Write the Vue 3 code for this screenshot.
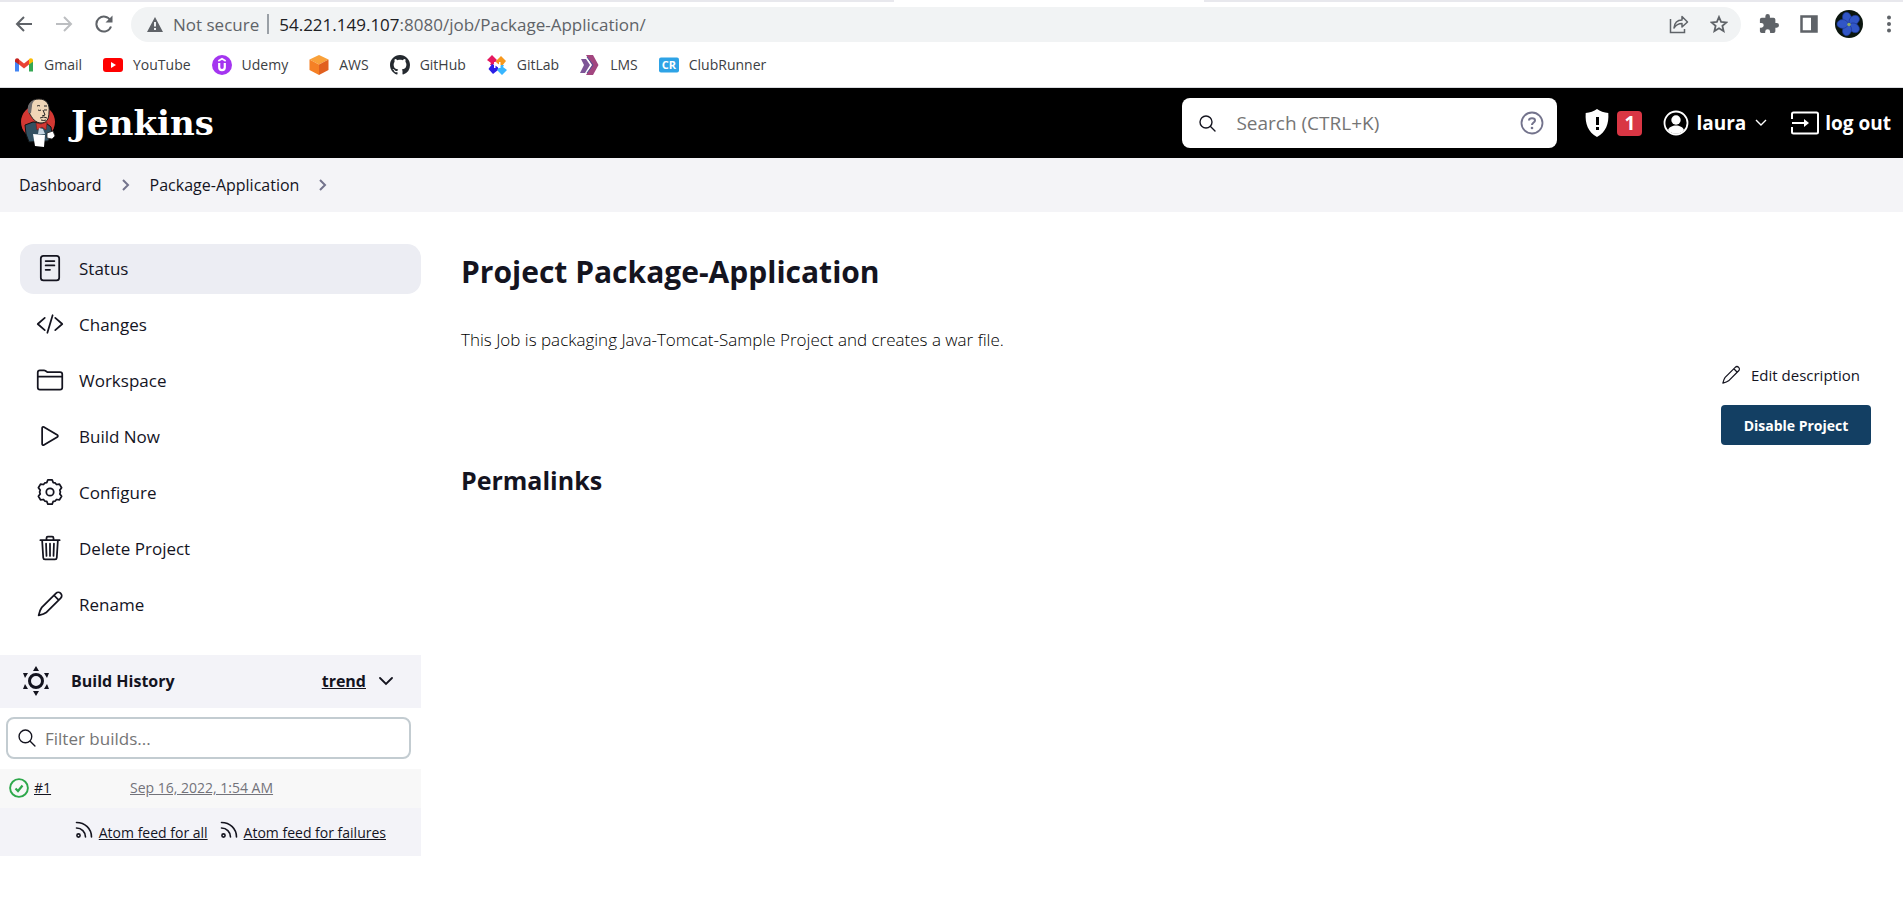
<script setup>
const bookmarks = [
  { id: 'gmail', label: 'Gmail' },
  { id: 'youtube', label: 'YouTube' },
  { id: 'udemy', label: 'Udemy' },
  { id: 'aws', label: 'AWS' },
  { id: 'github', label: 'GitHub' },
  { id: 'gitlab', label: 'GitLab' },
  { id: 'lms', label: 'LMS' },
  { id: 'club', label: 'ClubRunner' },
]
const tasks = [
  { id: 'status', label: 'Status', active: true },
  { id: 'changes', label: 'Changes' },
  { id: 'workspace', label: 'Workspace' },
  { id: 'build', label: 'Build Now' },
  { id: 'configure', label: 'Configure' },
  { id: 'delete', label: 'Delete Project' },
  { id: 'rename', label: 'Rename' },
]
const feeds = ['Atom feed for all', 'Atom feed for failures']

// Six-lobed cog outline on a 512 grid
const cogProfile = [[-19, 182], [-10, 226], [10, 226], [19, 182], [30, 190]]
const cogPoints = Array.from({ length: 6 }, (_, k) =>
  cogProfile.map(([deg, r]) => {
    const a = ((k * 60 - 90 + deg) * Math.PI) / 180
    return `${Math.round(256 + r * Math.cos(a))},${Math.round(256 + r * Math.sin(a))}`
  }).join(' ')
).join(' ')
const pencil = 'M364 60A62 62 0 01452 148L194 406Q150 440 48 464Q72 362 106 318ZM328 96l88 88'
</script>

<template>
  <div class="page">
    <div class="tabs"><span class="tab"></span></div>
    <div class="toolbar">
      <button class="tool" aria-label="Back">
        <svg width="18" height="18" viewBox="0 0 18 18" fill="none" stroke="#5f6368" stroke-width="2"><path d="M17 9H2M9 2L2 9l7 7" /></svg>
      </button>
      <button class="tool" aria-label="Forward">
        <svg width="18" height="18" viewBox="0 0 18 18" fill="none" stroke="#bcbec1" stroke-width="2"><path d="M1 9h15M9 2l7 7-7 7" /></svg>
      </button>
      <button class="tool" aria-label="Reload">
        <svg width="18" height="18" viewBox="0 0 18 18" fill="none" stroke="#5f6368" stroke-width="2"><path d="M15.500 5.500A7.500 7.500 0 1 0 16 11.500" /><path d="M17.500.5v7h-7z" fill="#5f6368" stroke="none" /></svg>
      </button>
      <div class="omnibox">
        <svg width="16" height="15" viewBox="0 0 16 15"><path d="M8 0l8 15H0z" fill="#5f6368" /><path d="M7 5h2v4.500H7zM7 11h2v2H7z" fill="#f1f3f4" /></svg>
        <span class="insecure">Not secure</span>
        <span class="sep"></span>
        <span class="url"><b>54.221.149.107</b>:8080/job/Package-Application/</span>
        <button class="in-pill" aria-label="Share">
          <svg width="20" height="20" viewBox="0 0 20 20" fill="none" stroke="#5f6368" stroke-width="1.500"><path d="M1.500 5v13.500h14V15" /><path d="M5 14C5.500 9 8.500 6 13 6V2.500L18.500 8 13 13V9.500C9.500 9.500 7 11 5 14z" stroke-linejoin="round" /></svg>
        </button>
        <button class="in-pill" aria-label="Bookmark">
          <svg width="18" height="18" viewBox="0 0 18 18" fill="none" stroke="#5f6368" stroke-width="1.800"><path d="M9 2l2.100 4.900 5.300.5-4 3.500 1.200 5.200L9 13.300l-4.600 2.800 1.200-5.200-4-3.500 5.300-.5z" /></svg>
        </button>
      </div>
      <button class="ext" aria-label="Extensions">
        <svg width="20" height="20" viewBox="1 1 22 22" fill="#5f6368"><path d="M20.500 11H19V7a2 2 0 0 0-2-2h-4V3.500a2.500 2.500 0 0 0-5 0V5H4a2 2 0 0 0-2 2v3.800h1.500a2.700 2.700 0 0 1 0 5.400H2V20a2 2 0 0 0 2 2h3.800v-1.500a2.700 2.700 0 0 1 5.400 0V22H17a2 2 0 0 0 2-2v-4h1.500a2.500 2.500 0 0 0 0-5z" /></svg>
      </button>
      <button class="ext" aria-label="Side panel">
        <svg width="18" height="18" viewBox="0 0 18 18"><path d="M1.500 1.500h15v15h-15z" fill="#fff" stroke="#5f6368" stroke-width="2.500" /><path d="M11 1h6v16h-6z" fill="#5f6368" /></svg>
      </button>
      <button class="ext" aria-label="Profile">
        <svg width="28" height="28" viewBox="0 0 28 28">
          <circle cx="14" cy="14" r="14" fill="#0b160f" />
          <g fill="#3156c6" stroke="#1c3590" stroke-width=".6">
            <ellipse v-for="a in [-18, 54, 126, 198, 270]" :key="a" cx="14" cy="7.500" rx="4.400" ry="5.600" :transform="`rotate(${a} 14 14)`" />
          </g>
          <circle cx="14" cy="14.500" r="1.800" fill="#8fae6a" />
        </svg>
      </button>
      <button class="menu" aria-label="Menu">
        <svg width="6" height="18" viewBox="0 0 6 18" fill="#5f6368"><circle cx="3" cy="2.500" r="2" /><circle cx="3" cy="9" r="2" /><circle cx="3" cy="15.500" r="2" /></svg>
      </button>
    </div>

    <nav class="bookmarks" aria-label="Bookmarks">
      <a v-for="b in bookmarks" :key="b.id" href="#">
        <svg width="20" height="20" viewBox="0 0 20 20">
          <template v-if="b.id === 'gmail'">
            <path d="M1 5v11.500h4V9z" fill="#4285f4" /><path d="M15 9v7.500h4V5z" fill="#34a853" />
            <path d="M5 4.500v5l5 4 5-4v-5l-5 4z" fill="#ea4335" /><path d="M1 5.500C1 3 3.500 2.600 5 4v5.500L1 6.800z" fill="#c5221f" /><path d="M19 5.500C19 3 16.500 2.600 15 4v5.500l4-2.700z" fill="#fbbc04" />
          </template>
          <template v-else-if="b.id === 'youtube'">
            <rect y="3" width="20" height="14" rx="3" fill="#f00" /><path d="M8 7l5 3-5 3z" fill="#fff" />
          </template>
          <template v-else-if="b.id === 'udemy'">
            <circle cx="10" cy="10" r="10" fill="#a435f0" /><path d="M6.300 6L10 3.800 13.700 6" fill="none" stroke="#fff" stroke-width="1.700" /><path d="M7.200 8v4.300a2.800 2.800 0 0 0 5.600 0V8" fill="none" stroke="#fff" stroke-width="2.200" />
          </template>
          <template v-else-if="b.id === 'aws'">
            <path d="M10 0l9.500 4.500L10 9.500.5 4.500z" fill="#f9a13a" /><path d="M.5 4.500l9.500 5V20l-9.500-5z" fill="#f58025" /><path d="M19.500 4.500l-9.500 5V20l9.500-5z" fill="#e1601f" />
          </template>
          <path v-else-if="b.id === 'github'" transform="scale(1.250)" fill="#24292f" d="M8 0C3.580 0 0 3.580 0 8c0 3.540 2.290 6.530 5.470 7.590.4.070.55-.17.55-.38 0-.19-.01-.82-.01-1.490-2.010.37-2.530-.49-2.690-.94-.09-.23-.48-.94-.82-1.130-.28-.15-.68-.52-.01-.53.63-.01 1.080.58 1.230.82.72 1.210 1.870.87 2.330.66.070-.52.280-.87.510-1.070-1.780-.2-3.640-.89-3.640-3.950 0-.87.310-1.590.82-2.150-.08-.2-.36-1.020.08-2.120 0 0 .67-.21 2.200.82.64-.18 1.320-.27 2-.27s1.360.09 2 .27c1.530-1.040 2.200-.82 2.200-.82.44 1.100.16 1.920.08 2.120.51.560.82 1.270.82 2.150 0 3.070-1.870 3.750-3.650 3.950.29.25.54.73.54 1.480 0 1.070-.01 1.930-.01 2.200 0 .21.15.46.55.38A8.010 8.010 0 0 0 16 8c0-4.420-3.580-8-8-8z" />
          <template v-else-if="b.id === 'gitlab'">
            <path d="M5 0l5 5-4 5H3l1-2-4-3z" fill="#e5195f" /><path d="M14 1l5 5-4 5-6-3V6z" fill="#f7981d" /><path d="M5 9l6 3v3l-5 4-4.500-5z" fill="#2b1ee6" /><path d="M14 10h3l-1 2 4 3-5 5-5-5z" fill="#38b6ff" /><path d="M7 7h2l3 3V7h1.500v6h-2l-3-3v3H7z" fill="#fff" />
          </template>
          <template v-else-if="b.id === 'lms'">
            <path d="M6 0h7l5.500 10L13 20H6l6-10z" fill="#a2467f" /><path d="M1 4h5l4 6-5 8H0l4-8z" fill="#7d5597" /><path d="M7 2l6 8-6 8" fill="none" stroke="#4a5199" />
          </template>
          <template v-else>
            <rect y="2.500" width="20" height="15" rx="2" fill="#2ea3e6" /><text x="10" y="14" text-anchor="middle" class="cr">CR</text>
          </template>
        </svg>
        {{ b.label }}
      </a>
    </nav>

    <header class="header">
      <a class="brand" href="#">
        <svg width="36" height="50" viewBox="0 0 36 50">
          <circle cx="18" cy="24" r="17" fill="#d33833" />
          <path d="M5 27l8-3 13 1 5 4 1 8-4 6-19 1-3-8z" fill="#335061" stroke="#111" />
          <path d="M9 14C7 6 11 1 19 1s11 6 10 13c0 8-3 11-8 11s-9-4-12-11z" fill="#f0d6b7" stroke="#222" />
          <path d="M8.500 15C6 8 10 3 15 2c-2 2-3 3-3 6l-1 7z" fill="#6d6b6d" />
          <path d="M17 8q2-1 3 0M24 8h3M18 12q2 1 3 0M24 12h3M23 12l2 5-3 1M20 20q4-2 7 0M21 22q3 1 5 0" fill="none" stroke="#222" />
          <path d="M16 25l5 1 6-2-1 8-4-3-5 3z" fill="#d33833" stroke="#7c1512" stroke-width=".6" />
          <path d="M19 30l4 1 2 5h-7z" fill="#c6d6e2" />
          <path d="M13 36l12 1-1 12-9-1z" fill="#fff" />
          <path d="M27 35l6-2 2 5-3 3-5-1z" fill="#fff" stroke="#222" stroke-width=".8" />
        </svg>
        <span>Jenkins</span>
      </a>
      <label class="search">
        <svg width="17" height="17" viewBox="0 0 17 17" fill="none" stroke="#14141f" stroke-width="1.400" stroke-linecap="round"><circle cx="7" cy="7" r="6" /><path d="M11.500 11.500L16 16" /></svg>
        <input type="search" placeholder="Search (CTRL+K)" aria-label="Search" />
        <svg width="24" height="24" viewBox="0 0 24 24" fill="none" stroke="#73738c" stroke-width="1.800"><circle cx="12" cy="12" r="10.500" /><path d="M9 9.500C9 6.500 15 6.500 15 9.500c0 2-3 2-3 4.500" stroke-width="2" /><circle cx="12" cy="17" r="1.300" fill="#73738c" stroke="none" /></svg>
      </label>
      <a class="alerts" href="#" aria-label="Security warnings">
        <svg width="24" height="28" viewBox="0 0 24 28"><path d="M12 0c3 2.300 7 3.600 11.300 4 .7 11-2.300 19-11.300 24C3 23 0 15 .7 4 5 3.600 9 2.300 12 0z" fill="#fff" /><path d="M11 8h3v8h-3zM11 18h3v3h-3z" fill="#000" /></svg>
        <span class="badge">1</span>
      </a>
      <a class="user" href="#">
        <svg width="26" height="26" viewBox="0 0 26 26"><circle cx="13" cy="13" r="11.500" fill="none" stroke="#fff" stroke-width="1.800" /><circle cx="13" cy="10" r="4.700" fill="#fff" /><path d="M5 20c2-6 14-6 16 0-4 5-12 5-16 0z" fill="#fff" /></svg>
        laura
        <svg class="chev" width="12" height="8" viewBox="0 0 12 8" fill="none" stroke="#fff" stroke-width="1.400"><path d="M1 1l5 5 5-5" /></svg>
      </a>
      <a class="logout" href="#">
        <svg width="28" height="24" viewBox="0 0 28 24" fill="none" stroke="#fff" stroke-width="2"><path d="M1 8V3q0-1.500 1.500-1.500h23Q27 1.500 27 3v18q0 1.500-1.500 1.500h-23Q1 22.500 1 21v-5M1 12h14" /><path d="M13 8l5 4-5 4z" fill="#fff" stroke="none" /></svg>
        log out
      </a>
    </header>

    <nav class="crumbs" aria-label="Breadcrumb">
      <a href="#">Dashboard</a>
      <svg width="8" height="12" viewBox="0 0 8 12"><path d="M1 1l5 5-5 5" /></svg>
      <a href="#">Package-Application</a>
      <svg width="8" height="12" viewBox="0 0 8 12"><path d="M1 1l5 5-5 5" /></svg>
    </nav>

    <div class="body">
      <aside class="side">
        <nav class="tasks" aria-label="Project tasks">
          <a v-for="t in tasks" :key="t.id" href="#" :class="{ active: t.active }">
            <svg width="28" height="28" viewBox="0 0 512 512" fill="none" stroke="currentColor" stroke-width="32" stroke-linejoin="round" stroke-linecap="round">
              <template v-if="t.id === 'status'">
                <rect x="88" y="32" width="336" height="448" rx="48" /><path d="M176 128h160M176 208h160M176 288h80" />
              </template>
              <path v-else-if="t.id === 'changes'" d="M160 368L32 256l128-112M352 368l128-112-128-112M304 96l-96 320" />
              <path v-else-if="t.id === 'workspace'" d="M440 432H72a40 40 0 01-40-40V120a40 40 0 0140-40h75.890a40 40 0 0122.190 6.720l27.840 18.560a40 40 0 0022.190 6.720H440a40 40 0 0140 40v240a40 40 0 01-40 40zM32 192h448" />
              <path v-else-if="t.id === 'build'" d="M112 111v290c0 17.440 17 28.520 31 20.160l247.900-148.370c12.120-7.250 12.120-26.330 0-33.580L143 90.840c-14-8.360-31 2.720-31 20.160z" />
              <template v-else-if="t.id === 'configure'">
                <polygon :points="cogPoints" />
                <circle cx="256" cy="256" r="68" />
              </template>
              <path v-else-if="t.id === 'delete'" d="M112 112l20 320c.950 18.490 14.400 32 32 32h184c17.670 0 30.870-13.510 32-32l20-320M80 112h352M192 112V72a24 24 0 0124-24h80a24 24 0 0124 24v40M256 176v224M184 176l8 224M328 176l-8 224" />
              <path v-else :d="pencil" />
            </svg>
            {{ t.label }}
          </a>
        </nav>
        <section class="history">
          <div class="history-head">
            <svg width="28" height="30" viewBox="0 0 28 30"><circle cx="14" cy="15" r="6.500" fill="none" stroke="#14141f" stroke-width="3" /><path d="M14 0l3 5h-6zM14 30l3-5h-6zM1 7h5L3 12zM27 7h-5l3 5zM1 23h5l-3-5zM27 23h-5l3-5z" fill="#14141f" /></svg>
            <h2>Build History</h2>
            <a href="#">trend</a>
            <svg width="14" height="10" viewBox="0 0 14 10" fill="none" stroke="#14141f" stroke-width="1.800" stroke-linecap="round"><path d="M1 2l6 6 6-6" /></svg>
          </div>
          <label class="filter">
            <svg width="18" height="18" viewBox="0 0 17 17" fill="none" stroke="#14141f" stroke-width="1.300" stroke-linecap="round"><circle cx="7" cy="7" r="6" /><path d="M11.500 11.500L16 16" /></svg>
            <input type="search" placeholder="Filter builds..." aria-label="Filter builds" />
          </label>
          <div class="build">
            <svg width="20" height="20" viewBox="0 0 20 20" fill="none" stroke="#2ea84b"><circle cx="10" cy="10" r="8.900" stroke-width="1.900" /><path d="M6.500 10.500L9 13l4.500-5.500" stroke-width="2.200" /></svg>
            <a class="num" href="#">#1</a>
            <a class="date" href="#">Sep 16, 2022, 1:54 AM</a>
          </div>
          <div class="feeds">
            <a v-for="f in feeds" :key="f" href="#">
              <svg width="18" height="18" viewBox="0 0 18 18" fill="none" stroke="#14141f" stroke-width="1.600" stroke-linecap="round"><circle cx="3.500" cy="14.500" r="1.600" /><path d="M1.500 7c5 0 9 4 9 9M1.500 1.500c8.500 0 15 6 15 14.500" /></svg>
              <span>{{ f }}</span>
            </a>
          </div>
        </section>
      </aside>

      <main class="main">
        <h1>Project Package-Application</h1>
        <p>This Job is packaging Java-Tomcat-Sample Project and creates a war file.</p>
        <div class="actions">
          <a href="#">
            <svg width="20" height="20" viewBox="0 0 512 512" fill="none" stroke="#14141f" stroke-width="32" stroke-linejoin="round"><path :d="pencil" /></svg>
            Edit description
          </a>
          <button>Disable Project</button>
        </div>
        <h2>Permalinks</h2>
      </main>
    </div>
  </div>
</template>

<style>
body { background: #fff; }
</style>

<style scoped>
.page { font-family: "Open Sans", "Noto Sans", sans-serif; color: #14141f; }
.page * { box-sizing: border-box; }
a { color: inherit; text-decoration: none; }
button { border: 0; padding: 0; background: none; font: inherit; color: inherit; }
svg { display: block; flex: none; }
input { font: inherit; color: inherit; border: 0; outline: 0; background: none; padding: 0; min-width: 0; flex: 1; }
input::placeholder { color: #757575; opacity: 1; }

.tabs { height: 2px; background: #e8e8ed; display: flex; padding-left: 47%; }
.tab { width: 310px; background: #fff; }
.toolbar { display: flex; align-items: center; height: 44px; padding: 0 11px 0 15px; }
.tool { width: 18px; margin-right: 22px; }
.omnibox { flex: 1; display: flex; align-items: center; height: 35px; margin: 0 8px 0 -4px; padding: 0 13px 0 16px; border-radius: 18px; background: #f1f3f4; color: #5f6368; font-size: 17px; }
.insecure { margin-left: 10px; }
.sep { width: 2px; height: 20px; margin: 0 10px 0 8px; background: #9aa0a6; }
.url { flex: 1; }
.url b { font-weight: 400; color: #202124; }
.in-pill { margin-left: 21px; }
.ext { display: flex; justify-content: center; width: 40px; }
.menu { margin-left: 17px; }

.bookmarks { display: flex; align-items: center; gap: 21px; height: 42px; padding: 0 14px 4px; border-bottom: 1px solid #dadce0; font-size: 14px; color: #3c4043; }
.bookmarks a { display: flex; align-items: center; gap: 10px; }
.cr { font: 700 11px "Open Sans", sans-serif; fill: #fff; }

.header { display: flex; align-items: center; height: 70px; padding: 0 12px 0 20px; background: #000; color: #fff; font-weight: 700; font-size: 19px; }
.brand { display: flex; align-items: center; gap: 15px; margin-right: auto; font: 700 34px/46px "DejaVu Serif", serif; }
.search { display: flex; align-items: center; gap: 20px; width: 375px; height: 50px; padding: 0 13px 0 17px; margin-right: 28px; border-radius: 8px; background: #fff; color: #14141f; font-weight: 400; }
.alerts { display: flex; align-items: center; gap: 8px; margin-right: 21px; }
.badge { width: 25px; height: 25px; border-radius: 4px; background: #d93644; text-align: center; line-height: 25px; }
.user { display: flex; align-items: center; gap: 7px; margin-right: 24px; }
.chev { margin-left: 2px; }
.logout { display: flex; align-items: center; gap: 6px; }

.crumbs { display: flex; align-items: center; gap: 20px; height: 54px; padding: 0 19px; background: #f4f4f7; font-size: 16px; }
.crumbs svg { fill: none; stroke: #73738c; stroke-width: 2; }

.body { display: flex; gap: 40px; }
.side { width: 421px; flex: none; }
.tasks { display: flex; flex-direction: column; gap: 6px; padding: 32px 0 0 20px; }
.tasks a { display: flex; align-items: center; gap: 15px; height: 50px; padding: 0 16px 2px; border-radius: 14px; font-size: 17px; }
.tasks a.active { background: #ecedf3; }
.history { margin-top: 25px; }
.history-head { display: flex; align-items: center; height: 53px; padding: 0 28px 2px 22px; background: #f3f3f8; font-size: 16px; font-weight: 700; }
.history-head h2 { margin: 0 auto 0 21px; font-size: 16px; }
.history-head a { margin-right: 13px; text-decoration: underline; }
.filter { display: flex; align-items: center; gap: 9px; height: 42px; margin: 9px 10px 10px 6px; padding: 0 10px; border: 2px solid #c3ccd1; border-radius: 8px; font-size: 17px; }
.build { display: flex; align-items: center; height: 39px; padding: 0 0 2px 9px; background: #f8f8f8; font-size: 14px; }
.build a { text-decoration: underline; }
.num { width: 96px; margin-left: 5px; }
.date { color: #73737a; }
.feeds { display: flex; justify-content: flex-end; gap: 12px; height: 48px; padding: 0 35px 0 0; background: #f3f3f8; font-size: 14px; }
.feeds a { display: flex; align-items: center; gap: 6px; }
.feeds svg { margin-bottom: 5px; }
.feeds span { text-decoration: underline; }

.main { flex: 1; min-width: 0; padding: 37px 32px 0 0; }
h1 { margin: 0; font-size: 30px; line-height: 46px; }
.main p { margin: 33px 0 0; font-size: 17px; line-height: 24px; font-weight: 300; color: #000; }
.actions { display: flex; flex-direction: column; align-items: flex-end; gap: 14px; margin-top: 7px; font-size: 15px; }
.actions a { display: flex; align-items: center; gap: 10px; height: 32px; width: 150px; }
.actions button { width: 150px; height: 40px; border-radius: 4px; background: #133f63; color: #fff; font-size: 14px; font-weight: 700; }
.main h2 { margin: 17px 0 0; font-size: 25px; line-height: 36px; }
</style>
